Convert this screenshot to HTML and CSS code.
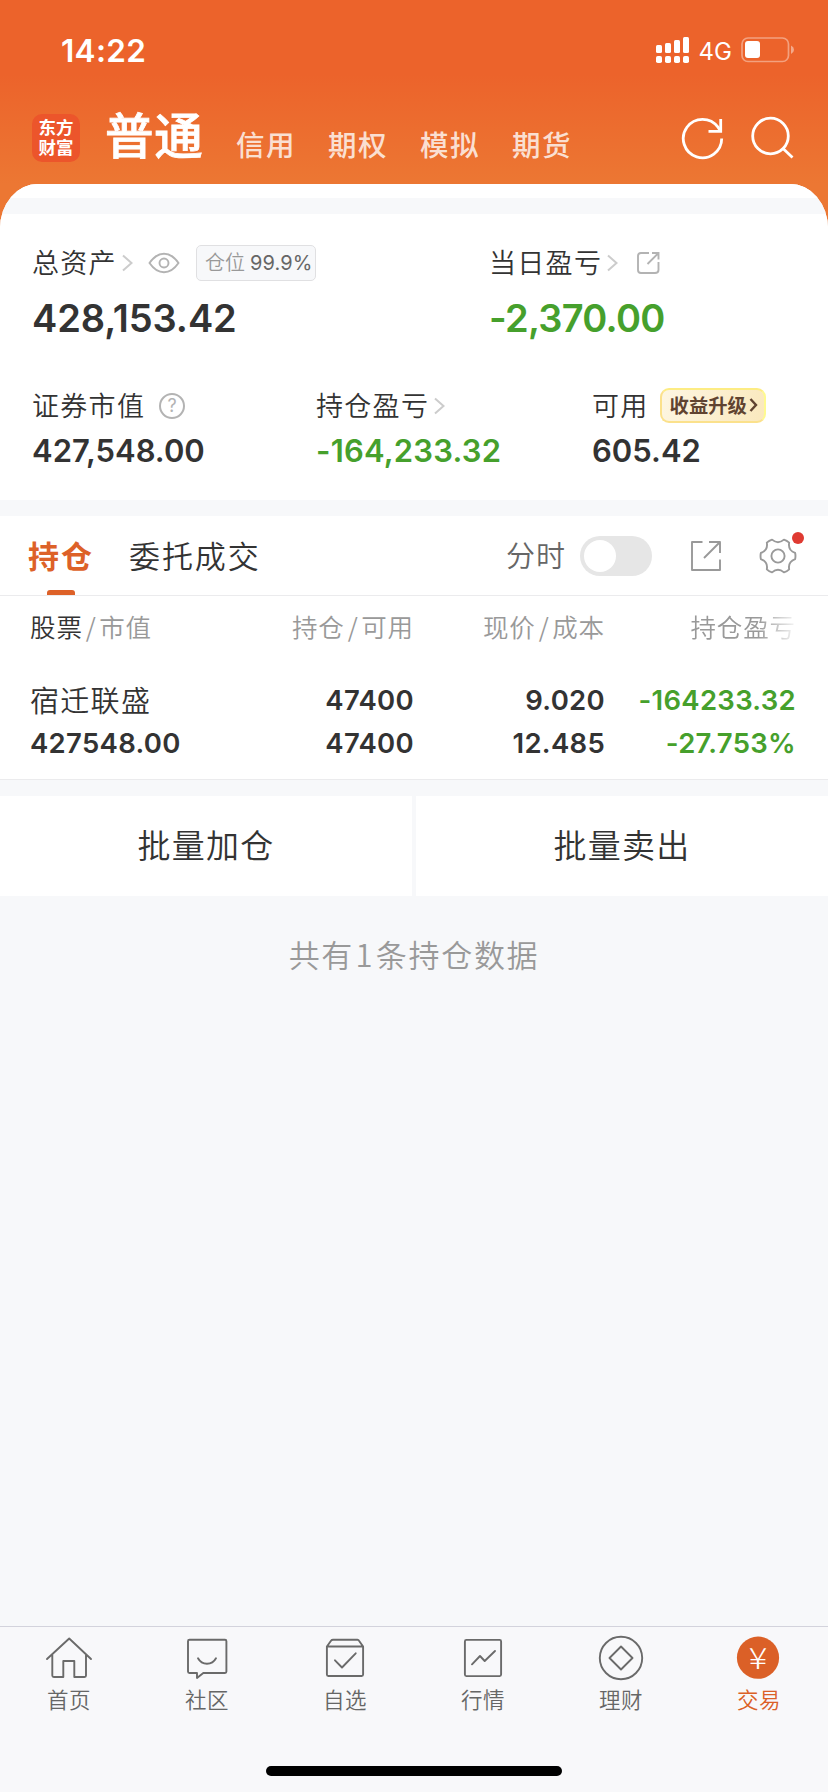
FILE: index.html
```html
<!DOCTYPE html>
<html lang="zh-CN">
<head>
<meta charset="utf-8">
<title>交易</title>
<link rel="stylesheet" href="styles.css">
</head>
<body>
<div class="screen">
  <header class="header">
    <div class="status">
      <span class="status-time">14:22</span>
      <div class="status-right">
        <svg class="signal" width="33" height="26" viewBox="0 0 33 26" fill="#fff"><rect x="0" y="8" width="6" height="8" rx="1.5"/><rect x="9" y="6" width="6" height="10" rx="1.5"/><rect x="18" y="3" width="6" height="13" rx="1.5"/><rect x="27" y="0" width="6" height="16" rx="1.5"/><rect x="0" y="19" width="6" height="7" rx="1.8"/><rect x="9" y="19" width="6" height="7" rx="1.8"/><rect x="18" y="19" width="6" height="7" rx="1.8"/><rect x="27" y="19" width="6" height="7" rx="1.8"/></svg>
        <span class="network">4G</span>
        <svg class="battery" width="54" height="26" viewBox="0 0 54 26"><rect x="1" y="1" width="46.5" height="23.5" rx="6" fill="none" stroke="#fff" stroke-opacity=".4" stroke-width="1.7"/><rect x="4" y="4" width="15" height="17" rx="3" fill="#fff"/><path d="M50 8.5Q53 10 53 12.700T50 17Z" fill="#fff" fill-opacity=".45"/></svg>
      </div>
    </div>
    <div class="nav">
      <div class="logo">东方<br>财富</div>
      <span class="account active">普通</span>
      <div class="accounts"><span class="account">信用</span><span class="account">期权</span><span class="account">模拟</span><span class="account">期货</span></div>
      <div class="nav-actions">
        <svg width="44" height="44" viewBox="0 0 44 44" fill="none" stroke="#fff" stroke-width="2.8"><path d="M41.700 22.500A19.200 19.200 0 1 1 38 11.200L40.500 15"/><path d="M40.700 3V15.300H28.500"/></svg>
        <svg width="44" height="44" viewBox="0 0 44 44" fill="none" stroke="#fff" stroke-width="2.8"><circle cx="20.500" cy="20" r="17.800"/><path d="M33 32.500L42.500 41.500"/></svg>
      </div>
    </div>
  </header>

  <main class="content">
    <div class="strip-top"></div>
    <section class="summary">
      <div class="totals">
        <div>
          <div class="label-row">
            <span class="label">总资产</span>
            <svg class="chev" width="11" height="18" viewBox="0 0 11 18"><path d="M1 1.500L9.500 9L1 16.500"/></svg>
            <svg class="eye" width="32" height="22" viewBox="0 0 32 22" fill="none" stroke="#b3b3b3" stroke-width="1.900"><path d="M1.500 11C6 4.500 10.500 1.700 16 1.700S26 4.500 30.500 11C26 17.500 21.500 20.300 16 20.300S6 17.500 1.500 11Z"/><circle cx="16" cy="11" r="4.500"/></svg>
            <span class="position"><span class="position-name">仓位</span><span class="position-value">99.9%</span></span>
          </div>
          <div class="amount large">428,153.42</div>
        </div>
        <div>
          <div class="label-row">
            <span class="label">当日盈亏</span>
            <svg class="chev" width="11" height="18" viewBox="0 0 11 18"><path d="M1 1.500L9.500 9L1 16.500"/></svg>
            <svg class="share-small" width="24" height="24" viewBox="0 0 24 24" fill="none" stroke="#b3b3b3" stroke-width="1.900"><path d="M13 2H5Q2 2 2 5V19Q2 22 5 22H19Q22.500 22 22.500 19V11M16 2H22.500V8.500M22.500 2L11.500 13"/></svg>
          </div>
          <div class="amount large down day-value">-2,370.00</div>
        </div>
      </div>
      <div class="details">
        <div>
          <div class="label-row">
            <span class="label">证券市值</span>
            <span class="help">?</span>
          </div>
          <div class="amount">427,548.00</div>
        </div>
        <div>
          <div class="label-row">
            <span class="label">持仓盈亏</span>
            <svg class="chev" width="11" height="18" viewBox="0 0 11 18"><path d="M1 1.500L9.500 9L1 16.500"/></svg>
          </div>
          <div class="amount down holding-value">-164,233.32</div>
        </div>
        <div>
          <div class="label-row">
            <span class="label">可用</span>
            <span class="upgrade">收益升级<svg width="9" height="14" viewBox="0 0 9 14" fill="none" stroke="#604330" stroke-width="2.400"><path d="M1.500 1L7 7L1.500 13"/></svg></span>
          </div>
          <div class="amount">605.42</div>
        </div>
      </div>
    </section>

    <section class="holdings">
      <div class="tabs">
        <div class="tab selected">持仓</div>
        <div class="tab">委托成交</div>
        <div class="tools">
          <span class="tools-label">分时</span>
          <span class="switch"></span>
          <svg class="share" width="32" height="32" viewBox="0 0 32 32" fill="none" stroke="#999" stroke-width="1.900"><path d="M12.500 2H2V30H30V19.500M19 2H30V13M30 2L14 18" stroke-linejoin="round"/></svg>
          <span class="settings">
            <svg width="40" height="40" viewBox="0 0 40 40" fill="none" stroke="#999" stroke-width="1.900" stroke-linejoin="round"><path d="M37.150 23.020Q29.800 25.650 31.180 33.330Q28.900 35.400 25.950 36.350Q20 31.300 14.050 36.350Q11.100 35.400 8.820 33.330Q10.200 25.650 2.850 23.020Q2.200 20 2.850 16.980Q10.200 14.350 8.820 6.670Q11.100 4.600 14.050 3.650Q20 8.700 25.950 3.650Q28.900 4.600 31.180 6.670Q29.800 14.350 37.150 16.980Q37.800 20 37.150 23.020Z"/><circle cx="20" cy="20" r="6.600"/></svg>
            <i class="dot"></i>
          </span>
        </div>
      </div>
      <div class="grid thead">
        <span><b>股票</b><i>/</i>市值</span>
        <span>持仓<i>/</i>可用</span>
        <span>现价<i>/</i>成本</span>
        <span class="fade">持仓盈亏</span>
      </div>
      <div class="grid position-row">
        <span class="stock">宿迁联盛</span><span>47400</span><span>9.020</span><span class="down">-164233.32</span>
        <span>427548.00</span><span>47400</span><span>12.485</span><span class="down">-27.753%</span>
      </div>
    </section>

    <div class="actions"><div>批量加仓</div><div>批量卖出</div></div>
    <p class="count">共有<span>1</span>条持仓数据</p>
  </main>

  <footer class="tabbar">
    <div class="tabbar-items">
      <div class="item"><svg width="48" height="48" viewBox="0 0 48 48"><path d="M2 25L24.200 4.500L46 25M7.300 20.500V41.500Q7.300 43 8.800 43H18.300V27H29.300V43H39.500Q41 43 41 41.500V20.500"/></svg><span>首页</span></div>
      <div class="item"><svg width="48" height="48" viewBox="0 0 48 48"><path d="M6.500 5.700H42Q43.400 5.700 43.400 7.200V37.500Q43.400 39 42 39H20.300L14 44V39H6.500Q5 39 5 37.500V7.200Q5 5.700 6.500 5.700ZM15 24.300Q18 29.800 24 29.800T33 24.300"/></svg><span>社区</span></div>
      <div class="item"><svg width="48" height="48" viewBox="0 0 48 48"><path d="M5.900 12.500H42.100V40.500Q42.100 42 40.600 42H7.400Q5.900 42 5.900 40.500V12.500L10 6.700Q10.700 5.700 12 5.700H36.500Q37.500 5.700 38 6.700L42.100 12.500M14 26.300L21 33.500L34.700 19.300"/></svg><span>自选</span></div>
      <div class="item"><svg width="48" height="48" viewBox="0 0 48 48"><rect x="5.900" y="5.900" width="36.200" height="36.200" rx="1.500"/><path d="M13 30.300L21 22L25.700 27L36 17"/></svg><span>行情</span></div>
      <div class="item"><svg width="48" height="48" viewBox="0 0 48 48"><circle cx="24" cy="24" r="21.200"/><path d="M24 12.500L35.500 24L24 35.500L12.500 24Z"/></svg><span>理财</span></div>
      <div class="item current"><svg width="48" height="48" viewBox="0 0 48 48"><circle cx="23" cy="23.700" r="21.100"/><text x="13.700" y="34.500" textLength="18.500" lengthAdjust="spacingAndGlyphs">¥</text></svg><span>交易</span></div>
    </div>
    <div class="home-indicator"></div>
  </footer>
</div>
</body>
</html>
```
FILE: styles.css
```css
* { box-sizing: border-box; }

body {
  margin: 0;
  font-family: "Noto Sans CJK SC", sans-serif;
  font-weight: 350;
  color: #333;
  background: #f7f8fa;
}

i { font-style: normal; }
svg { display: block; flex: none; }
span { white-space: nowrap; }

.screen {
  width: 828px;
  height: 1792px;
  display: flex;
  flex-direction: column;
  overflow: hidden;
  background: linear-gradient(#ec632b 0, #ec632b 74px, #ec7733 184px, #ec7733 240px, #f7f8fa 240px);
}

/* Header */
.header { height: 184px; flex: none; color: #fff; }
.status {
  height: 100px;
  display: flex;
  justify-content: space-between;
  padding: 0 33px 0 61px;
  align-items: center;
}
.status-time { font: 600 31.500px "Inter", sans-serif; letter-spacing: .3px; }
.status-right { display: flex; align-items: center; }
.network { font: 400 24px "Inter", sans-serif; margin: 2px 9px 0 10px; }

.nav { height: 84px; display: flex; padding: 0 32px; }
.logo {
  width: 48px;
  height: 48px;
  margin: 14px 25px 0 0;
  padding-top: 3px;
  border-radius: 10px;
  background: #ec552b;
  text-align: center;
  font-size: 17.500px;
  font-weight: 700;
  line-height: 20px;
}
.account { font-size: 28.500px; font-weight: 500; line-height: 40px; letter-spacing: 1.500px; color: rgba(255, 255, 255, .8); }
.account.active { font-size: 48.500px; font-weight: 500; -webkit-text-stroke: .8px #fff; line-height: 64px; letter-spacing: .8px; color: #fff; width: 131px; padding-top: 1px; }
.accounts { display: flex; gap: 32px; padding-top: 24px; }
.nav-actions { display: flex; gap: 26px; margin-left: auto; padding-top: 16px; margin-right: 2px; }

/* Content */
.content { flex: 1; background: #f7f8fa; border-radius: 38px 38px 0 0 / 44px 44px 0 0; overflow: hidden; }
.strip-top { height: 30px; border-top: 14px solid #fff; background: #f7f8fa; }
.summary { height: 286px; background: #fff; padding: 25px 0 0 32px; }
.totals { display: grid; grid-template-columns: 457px 1fr; height: 143px; }
.details { display: grid; grid-template-columns: 284px 276px 1fr; }
.label-row { display: flex; align-items: center; height: 48px; }
.label { font-size: 27px; letter-spacing: 1.300px; line-height: 40px; padding-bottom: 3px; }
.chev { fill: none; stroke: #ccc; stroke-width: 2px; margin-left: 5px; }
.eye { margin-left: 15px; }
.share-small { margin-left: 18px; }
.position {
  margin-left: 16px;
  width: 120px;
  height: 36px;
  border: 1px solid #e0e0e2;
  border-radius: 5px;
  background: #f7f8fa;
  display: flex;
  align-items: center;
  padding-left: 8px;
}
.position-name { font-size: 20px; line-height: 30px; color: #999; padding-bottom: 2px; width: 45px; }
.position-value { font: 400 20px "Inter", sans-serif; color: #666; letter-spacing: .1px; }
.amount { font: 600 31px/40px "Inter", sans-serif; margin-top: 1px; }
.amount.large { font-size: 38px; line-height: 46px; margin-top: 8px; letter-spacing: -.1px; }
.amount.day-value { letter-spacing: -.75px; }
.amount.holding-value { letter-spacing: .2px; }
.down { color: #46a02c; }
.help {
  width: 26px;
  height: 26px;
  margin-left: 14px;
  border: 2px solid #b3b3b3;
  border-radius: 50%;
  font: 400 18px/22px "Inter", sans-serif;
  color: #b3b3b3;
  text-align: center;
}
.upgrade {
  width: 106px;
  height: 35px;
  margin: -2px 0 0 11px;
  border: 2px solid #fbe18c;
  border-top-color: #fdec83;
  border-right-color: #fefa90;
  border-radius: 9px;
  background: linear-gradient(110deg, #fdf6e2, #fae8bd);
  display: flex;
  align-items: center;
  gap: 2px;
  padding: 0 0 1px 8px;
  font-size: 19.300px;
  font-weight: 700;
  line-height: 28px;
  color: #604330;
}

/* Holdings */
.holdings { margin-top: 16px; height: 264px; background: #fff; border-bottom: 1px solid #ebebed; }
.tabs { height: 80px; border-bottom: 1px solid #ebebed; display: flex; padding-left: 28px; font-size: 31px; line-height: 77px; }
.tab { letter-spacing: 1.900px; height: 79px; }
.tab.selected { position: relative; width: 101px; font-weight: 700; color: #dd6128; }
.tab.selected::after {
  content: "";
  position: absolute;
  left: 19px;
  bottom: 0;
  width: 28px;
  height: 5px;
  border-radius: 3px 3px 0 0;
  background: #dd6128;
}
.tools { margin-left: auto; display: flex; align-items: center; }
.tools-label { font-size: 29px; letter-spacing: 1px; color: #666; padding-bottom: 2px; margin-right: 14px; }
.switch { width: 72px; height: 40px; padding: 4px; border-radius: 20px; background: #e6e6e6; }
.switch::before { content: ""; display: block; width: 32px; height: 32px; border-radius: 50%; background: #fff; }
.share { margin-left: 38px; }
.settings { position: relative; margin: 0 30px 0 36px; }
.dot { position: absolute; top: -4px; right: -6px; width: 12px; height: 12px; border-radius: 50%; background: #df3a32; }

.grid { display: grid; grid-template-columns: 200px 184px 191px 191px; padding-left: 30px; }
.grid > :not(:nth-child(4n + 1)) { text-align: right; }
.thead { height: 83px; font-size: 25.500px; line-height: 60px; letter-spacing: .9px; color: #999; }
.thead b { font-weight: 350; color: #333; }
.thead i { margin: 0 2.500px 0 3px; }
.fade { -webkit-mask-image: linear-gradient(90deg, #000 80%, transparent 102%); mask-image: linear-gradient(90deg, #000 80%, transparent 102%); }
.position-row { font: 600 27.500px/43px "Inter", sans-serif; letter-spacing: .3px; }
.stock { font: 350 29px/40px "Noto Sans CJK SC", sans-serif; letter-spacing: 1.300px; }

.actions { margin-top: 16px; display: grid; grid-template-columns: 1fr 1fr; gap: 4px; text-align: center; font-size: 33px; line-height: 97px; letter-spacing: 1.300px; }
.actions div { height: 100px; background: #fff; }
.count { margin: 34px 0 0; font-size: 31px; line-height: 48px; letter-spacing: 1.700px; text-align: center; color: #999; }
.count span { margin: 0 1.500px; }

/* Tab bar */
.tabbar { height: 166px; flex: none; background: #f8f8fa; border-top: 1px solid #d3d3dc; }
.tabbar-items { display: grid; grid-template-columns: repeat(6, 1fr); height: 139px; padding-top: 7px; }
.item { display: flex; flex-direction: column; align-items: center; color: #666; font-size: 21.500px; line-height: 32px; letter-spacing: .5px; }
.item span { margin-top: 1px; }
.item svg { fill: none; stroke: #6a6a6a; stroke-width: 1.900px; stroke-linecap: round; stroke-linejoin: round; }
.current { color: #db6027; }
.current svg { fill: #db6027; stroke: none; }
.current text { fill: #fff; font-size: 29px; font-weight: 300; letter-spacing: 0; }
.home-indicator { width: 296px; height: 10px; margin: 0 auto; border-radius: 5px; background: #000; }
```
